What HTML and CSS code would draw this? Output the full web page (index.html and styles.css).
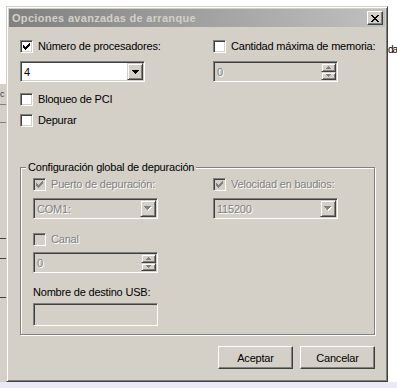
FILE: index.html
```html
<!DOCTYPE html>
<html lang="es">
<head>
    <meta charset="UTF-8">
    <meta name="viewport" content="width=device-width, initial-scale=1.0">
    <title>Opciones avanzadas de arranque</title>
    <link rel="stylesheet" href="styles.css">
</head>
<body>

    <div class="desk">
        <div class="side-left"><span class="side-c">c</span></div>

        <!-- Dialog window -->
        <div class="dialog">
            <div class="titlebar">
                <span class="title">Opciones avanzadas de arranque</span>
                <span class="close-btn">
                    <svg width="8" height="7" viewBox="0 0 8 7" shape-rendering="crispEdges"><path fill="#000" d="M0 0h2v1h-2zM6 0h2v1h-2zM1 1h2v1h-2zM5 1h2v1h-2zM2 2h4v1h-4zM3 3h2v1h-2zM2 4h4v1h-4zM1 5h2v1h-2zM5 5h2v1h-2zM0 6h2v1h-2zM6 6h2v1h-2z"/></svg>
                </span>
            </div>

            <div class="dlg-body">
                <div class="top-grid">
                    <div class="col">
                        <label class="check">
                            <span class="box">
                                <svg class="tick" width="7" height="7" viewBox="0 0 7 7" shape-rendering="crispEdges"><path d="M6 0h1v1h-1zM5 1h2v1h-2zM0 2h1v1h-1zM4 2h3v1h-3zM0 3h2v1h-2zM3 3h3v1h-3zM0 4h5v1h-5zM1 5h3v1h-3zM2 6h1v1h-1z"/></svg>
                            </span>
                            Número de procesadores:
                        </label>
                        <div class="field">
                            <span class="value">4</span>
                            <span class="drop-btn">
                                <svg width="7" height="4" viewBox="0 0 7 4" shape-rendering="crispEdges"><path fill="#000" d="M0 0h7v1h-7zM1 1h5v1h-5zM2 2h3v1h-3zM3 3h1v1h-1z"/></svg>
                            </span>
                        </div>
                    </div>
                    <div class="col">
                        <label class="check">
                            <span class="box"></span>
                            Cantidad máxima de memoria:
                        </label>
                        <div class="field disabled">
                            <span class="value">0</span>
                            <span class="spin-btns">
                                <span class="spin-btn up"><svg width="5" height="3" viewBox="0 0 5 3" shape-rendering="crispEdges"><path d="M2 0h1v1h-1zM1 1h3v1h-3zM0 2h5v1h-5z"/></svg></span>
                                <span class="spin-btn down"><svg width="5" height="3" viewBox="0 0 5 3" shape-rendering="crispEdges"><path d="M0 0h5v1h-5zM1 1h3v1h-3zM2 2h1v1h-1z"/></svg></span>
                            </span>
                        </div>
                    </div>
                </div>

                <div class="opts">
                    <label class="check"><span class="box"></span>Bloqueo de PCI</label>
                    <label class="check"><span class="box"></span>Depurar</label>
                </div>

                <!-- Debug settings group -->
                <div class="group">
                    <span class="group-label">Configuración global de depuración</span>
                    <div class="group-grid">
                        <div class="col">
                            <label class="check off">
                                <span class="box">
                                    <svg class="tick" width="7" height="7" viewBox="0 0 7 7" shape-rendering="crispEdges"><path d="M6 0h1v1h-1zM5 1h2v1h-2zM0 2h1v1h-1zM4 2h3v1h-3zM0 3h2v1h-2zM3 3h3v1h-3zM0 4h5v1h-5zM1 5h3v1h-3zM2 6h1v1h-1z"/></svg>
                                </span>
                                Puerto de depuración:
                            </label>
                            <div class="field disabled mt7">
                                <span class="value">COM1:</span>
                                <span class="drop-btn">
                                    <svg width="8" height="5" viewBox="0 0 8 5" shape-rendering="crispEdges"><path fill="#fff" d="M1 1h7v1h-7zM2 2h5v1h-5zM3 3h3v1h-3zM4 4h1v1h-1z"/><path fill="#808080" d="M0 0h7v1h-7zM1 1h5v1h-5zM2 2h3v1h-3zM3 3h1v1h-1z"/></svg>
                                </span>
                            </div>
                            <label class="check off mt14"><span class="box"></span>Canal</label>
                            <div class="field disabled mt6">
                                <span class="value">0</span>
                                <span class="spin-btns">
                                    <span class="spin-btn up"><svg width="5" height="3" viewBox="0 0 5 3" shape-rendering="crispEdges"><path d="M2 0h1v1h-1zM1 1h3v1h-3zM0 2h5v1h-5z"/></svg></span>
                                    <span class="spin-btn down"><svg width="5" height="3" viewBox="0 0 5 3" shape-rendering="crispEdges"><path d="M0 0h5v1h-5zM1 1h3v1h-3zM2 2h1v1h-1z"/></svg></span>
                                </span>
                            </div>
                            <span class="usb-label">Nombre de destino USB:</span>
                            <div class="field disabled tall"></div>
                        </div>
                        <div class="col">
                            <label class="check off">
                                <span class="box">
                                    <svg class="tick" width="7" height="7" viewBox="0 0 7 7" shape-rendering="crispEdges"><path d="M6 0h1v1h-1zM5 1h2v1h-2zM0 2h1v1h-1zM4 2h3v1h-3zM0 3h2v1h-2zM3 3h3v1h-3zM0 4h5v1h-5zM1 5h3v1h-3zM2 6h1v1h-1z"/></svg>
                                </span>
                                Velocidad en baudios:
                            </label>
                            <div class="field disabled mt7">
                                <span class="value">115200</span>
                                <span class="drop-btn">
                                    <svg width="8" height="5" viewBox="0 0 8 5" shape-rendering="crispEdges"><path fill="#fff" d="M1 1h7v1h-7zM2 2h5v1h-5zM3 3h3v1h-3zM4 4h1v1h-1z"/><path fill="#808080" d="M0 0h7v1h-7zM1 1h5v1h-5zM2 2h3v1h-3zM3 3h1v1h-1z"/></svg>
                                </span>
                            </div>
                        </div>
                    </div>
                </div>

                <div class="actions">
                    <button type="button" class="btn">Aceptar</button>
                    <button type="button" class="btn">Cancelar</button>
                </div>
            </div>
        </div>

        <div class="side-right">da</div>
    </div>
    <div class="bottom-strip"></div>

</body>
</html>
```

FILE: styles.css
```css
body {
    margin: 0;
    width: 397px;
    height: 388px;
    overflow: hidden;
    background-color: #fff;
    color: #000;
    font-family: "Liberation Sans", Arial, sans-serif;
    font-size: 11px;
    letter-spacing: -0.2px;
}
.desk {
    display: flex;
    height: 382px;
}
.side-left {
    width: 6px;
    margin-top: 84px;
    background: linear-gradient(#d4d0c8 0 20px, #808080 20px 21px, #d4d0c8 21px 38px, #808080 38px 39px, #d4d0c8 39px 154px, #404040 154px 155px, #d4d0c8 155px 174px, #404040 174px 175px, #d4d0c8 175px 213px, #404040 213px 214px, #d4d0c8 214px);
    overflow: hidden;
}
.side-c {
    display: block;
    margin-top: 5px;
    font-size: 9px;
    color: #404040;
}
.side-right {
    flex: 1;
    padding-top: 44px;
    overflow: hidden;
    white-space: nowrap;
    font-size: 10px;
    letter-spacing: -1px;
}
.bottom-strip {
    height: 6px;
    background-color: #e9e9f7;
}

/* Window frame */
.dialog {
    width: 382px;
    height: 376px;
    margin-top: 6px;
    box-sizing: border-box;
    background-color: #d4d0c8;
    border: 1px solid;
    border-color: #d4d0c8 #404040 #404040 #d4d0c8;
    box-shadow: inset 1px 1px 0 #fff, inset -1px -1px 0 #808080;
    padding: 2px;
    display: flex;
    flex-direction: column;
}
.titlebar {
    height: 18px;
    display: flex;
    align-items: center;
    padding: 0 2px 0 3px;
    background: linear-gradient(to right, #808080, #c0c0c0);
}
.title {
    flex: 1;
    color: #d4d0c8;
    font-weight: bold;
    letter-spacing: 0.3px;
}
.close-btn {
    width: 16px;
    height: 14px;
    box-sizing: border-box;
    display: flex;
    align-items: center;
    justify-content: center;
    background-color: #d4d0c8;
    border: 1px solid;
    border-color: #fff #404040 #404040 #fff;
    box-shadow: inset -1px -1px 0 #808080;
}
.dlg-body {
    flex: 1;
    padding: 13px 10px 0 11px;
    display: flex;
    flex-direction: column;
}

/* Layout */
.top-grid {
    display: grid;
    grid-template-columns: 193px 1fr;
}
.col {
    display: flex;
    flex-direction: column;
    align-items: flex-start;
}
.top-grid .col {
    gap: 8px;
}
.opts {
    margin-top: 11px;
    display: flex;
    flex-direction: column;
    gap: 8px;
}
.mt6 { margin-top: 6px; }
.mt7 { margin-top: 7px; }
.mt14 { margin-top: 14px; }

/* Checkboxes */
.check {
    display: flex;
    align-items: center;
    gap: 5px;
    height: 13px;
    line-height: 13px;
    white-space: nowrap;
}
.box {
    width: 13px;
    height: 13px;
    flex: none;
    box-sizing: border-box;
    display: flex;
    align-items: center;
    justify-content: center;
    background-color: #fff;
    border: 1px solid;
    border-color: #808080 #fff #fff #808080;
    box-shadow: inset 1px 1px 0 #404040, inset -1px -1px 0 #d4d0c8;
}
.tick {
    fill: #000;
}
.check.off {
    color: #808080;
    text-shadow: 1px 1px 0 #fff;
}
.check.off .box {
    background-color: #d4d0c8;
}
.check.off .tick {
    fill: #808080;
}

/* Fields */
.field {
    width: 125px;
    height: 21px;
    box-sizing: border-box;
    display: flex;
    padding: 2px;
    background-color: #fff;
    border: 1px solid;
    border-color: #808080 #fff #fff #808080;
    box-shadow: inset 1px 1px 0 #404040, inset -1px -1px 0 #d4d0c8;
}
.field.disabled {
    background-color: #d4d0c8;
    color: #808080;
    text-shadow: 1px 1px 0 #fff;
}
.field.tall {
    height: 23px;
    margin-top: 4px;
}
.value {
    flex: 1;
    padding-left: 1px;
    line-height: 17px;
}
.drop-btn,
.spin-btn {
    box-sizing: border-box;
    display: flex;
    align-items: center;
    justify-content: center;
    background-color: #d4d0c8;
    border: 1px solid;
    border-color: #d4d0c8 #404040 #404040 #d4d0c8;
    box-shadow: inset 1px 1px 0 #fff, inset -1px -1px 0 #808080;
}
.drop-btn {
    width: 16px;
    height: 17px;
    margin: -1px -1px 0 0;
}
.spin-btns {
    width: 15px;
    height: 17px;
    margin: -1px -1px 0 0;
    display: flex;
    flex-direction: column;
}
.spin-btn {
    flex: 1;
}
.spin-btn svg {
    fill: #808080;
}
.usb-label {
    margin-top: 13px;
    line-height: 13px;
}

/* Group box */
.group {
    margin-top: 40px;
    width: 355px;
    box-sizing: border-box;
    border: 1px solid #808080;
    box-shadow: 1px 1px 0 #fff, inset 1px 1px 0 #fff;
    padding: 0 12px 8px 12px;
}
.group-label {
    display: block;
    width: fit-content;
    margin: -7px 0 0 -7px;
    padding: 0 2px;
    line-height: 13px;
    background-color: #d4d0c8;
}
.group-grid {
    margin-top: 4px;
    display: grid;
    grid-template-columns: 180px 1fr;
}

/* Buttons */
.actions {
    margin-top: 11px;
    display: flex;
    justify-content: flex-end;
    gap: 7px;
}
.btn {
    width: 75px;
    height: 23px;
    padding: 0;
    font: inherit;
    letter-spacing: inherit;
    color: #000;
    background-color: #d4d0c8;
    border: 1px solid;
    border-color: #fff #404040 #404040 #fff;
    box-shadow: inset -1px -1px 0 #808080;
}
```
